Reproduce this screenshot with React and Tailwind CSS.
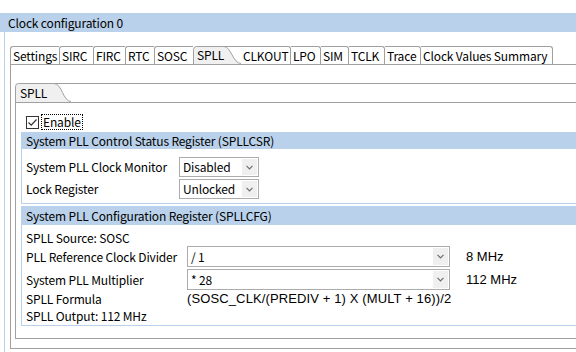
import React from "react";

const before = [
  ["Settings", "w-[49px]"],
  ["SIRC", "w-[34px]"],
  ["FIRC", "w-[32px]"],
  ["RTC", "w-[29px]"],
  ["SOSC", "w-[39px]"],
];
const after = [
  ["CLKOUT", "w-[50px]"],
  ["LPO", "w-[30px]"],
  ["SIM", "w-[28px]"],
  ["TCLK", "w-[36px]"],
  ["Trace", "w-[36px]"],
  ["Clock Values Summary", "w-[132px]"],
];

function Chevron() {
  return (
    <svg width="7" height="5" viewBox="0 0 7 5">
      <path d="M0.5 0.8 L3.5 3.8 L6.5 0.8" stroke="#6d6d6d" strokeWidth="1.2" fill="none" />
    </svg>
  );
}

function Combo({ value, cls }) {
  return (
    <div className={`flex items-center border border-[#acacac] bg-white ${cls}`}>
      <span className="flex-1 pl-[3px] whitespace-nowrap">{value}</span>
      <span className="w-[15px] self-stretch my-[1px] mr-[1px] bg-[#efefef] flex items-center justify-center">
        <Chevron />
      </span>
    </div>
  );
}

export default function App() {
  return (
    <div className="w-[576px] h-[352px] bg-white overflow-hidden font-['Noto_Sans_CJK_KR','Noto_Sans',sans-serif] text-[12px] tracking-[-0.15px] text-black leading-none">
      <div className="h-[13px]" />
      <div className="h-[19px] bg-[#b9d1ea] pl-[8px] flex items-center">Clock configuration 0</div>
      <div className="flex h-[320px]">
        <div className="w-[4px]" />
        <div className="w-[1px] bg-[#b9d1ea]" />
        <div className="w-[5px]" />
        <div className="flex-1 flex flex-col min-w-0">
          <div className="h-[14px]" />
          {/* outer tab strip */}
          <div className="flex h-[19px] border-b border-[#a0a0a0]">
            {before.map(([t, w]) => (
              <div key={t} className={`${w} h-[18px] border-t border-l border-[#a0a0a0] rounded-tl-[3px] pl-[2px] flex items-center whitespace-nowrap`}>
                {t}
              </div>
            ))}
            <div className="w-[48px] h-[18px] relative flex items-center pl-[4px]">
              <svg className="absolute inset-0" width="48" height="18" viewBox="0 0 48 18">
                <path d="M0.5 18 V3.5 Q0.5 0.5 3.5 0.5 H31 C38 0.5 40 17.5 48 17.5 V18 Z" fill="#f0f0f0" stroke="none" />
                <path d="M0.5 18 V3.5 Q0.5 0.5 3.5 0.5 H31 C38 0.5 40 17.5 48 17.5" fill="none" stroke="#a0a0a0" />
                <path d="M31 0.5 H48" stroke="#a0a0a0" />
              </svg>
              <span className="relative">SPLL</span>
            </div>
            {after.map(([t, w]) => (
              <div key={t} className={`${w} h-[18px] border-t border-r border-[#a0a0a0] rounded-tr-[3px] pl-[2px] flex items-center whitespace-nowrap`}>
                {t}
              </div>
            ))}
          </div>
          {/* outer content */}
          <div className="border-l border-b border-[#a0a0a0] pt-[18px] pl-[4px] pb-[9px]">
            {/* inner tab strip */}
            <div className="flex h-[20px] border-b border-[#a0a0a0]">
              <div className="w-[56px] h-[19px] relative flex items-center pl-[5px]">
                <svg className="absolute inset-0" width="56" height="19" viewBox="0 0 56 19">
                  <path d="M0.5 19 V3.5 Q0.5 0.5 3.5 0.5 H39 C47 0.5 48 18.5 56 18.5 V19 Z" fill="#f0f0f0" stroke="none" />
                  <path d="M0.5 19 V3.5 Q0.5 0.5 3.5 0.5 H39 C47 0.5 48 18.5 56 18.5" fill="none" stroke="#a0a0a0" />
                  <path d="M39 0.5 H56" stroke="#a0a0a0" />
                </svg>
                <span className="relative">SPLL</span>
              </div>
              <div className="flex-1 border-t border-[#a0a0a0]" />
            </div>
            {/* inner content */}
            <div className="border-l border-b border-[#a0a0a0] pl-[5px] pb-[12px]">
              <div className="h-[11px]" />
              <div className="h-[16px] flex items-center pl-[5px]">
                <div className="w-[13px] h-[13px] border border-[#333333] bg-white flex items-center justify-center">
                  <svg width="11" height="11" viewBox="0 0 11 11">
                    <path d="M1.5 5.5 L4.2 8.2 L9.5 2.5" stroke="#333333" strokeWidth="1.2" fill="none" />
                  </svg>
                </div>
                <span className="ml-[2px] h-[16px] border border-dotted border-black px-[1px] flex items-center">Enable</span>
              </div>
              <div className="h-[2px]" />
              {/* section 1 */}
              <div className="border-l border-b border-[#b9d1ea]">
                <div className="h-[17px] bg-[#b9d1ea] pl-[4px] flex items-center whitespace-nowrap">
                  System PLL Control Status Register (SPLLCSR)
                </div>
                <div className="pl-[4px] pt-[8px] pb-[4px] flex flex-col gap-[2px]">
                  <div className="flex items-center h-[20px]">
                    <span className="w-[153px]">System PLL Clock Monitor</span>
                    <Combo value="Disabled" cls="w-[80px] h-[20px]" />
                  </div>
                  <div className="flex items-center h-[20px]">
                    <span className="w-[153px]">Lock Register</span>
                    <Combo value="Unlocked" cls="w-[80px] h-[20px]" />
                  </div>
                </div>
              </div>
              <div className="h-[2px]" />
              {/* section 2 */}
              <div className="border-l border-b border-[#b9d1ea]">
                <div className="h-[19px] bg-[#b9d1ea] pl-[4px] flex items-center whitespace-nowrap">
                  System PLL Configuration Register (SPLLCFG)
                </div>
                <div className="pl-[4px] pt-[4px] pb-[1px] flex flex-col">
                  <div className="h-[17px] flex items-center">SPLL Source: SOSC</div>
                  <div className="flex items-center h-[21px]">
                    <span className="w-[161px]">PLL Reference Clock Divider</span>
                    <Combo value="/ 1" cls="w-[263px] h-[21px]" />
                    <span className="ml-[16px] font-['Liberation_Sans',sans-serif] text-[13px] tracking-normal">8 MHz</span>
                  </div>
                  <div className="h-[2px]" />
                  <div className="flex items-center h-[21px]">
                    <span className="w-[161px]">System PLL Multiplier</span>
                    <Combo value="* 28" cls="w-[263px] h-[21px]" />
                    <span className="ml-[16px] font-['Liberation_Sans',sans-serif] text-[13px] tracking-normal">112 MHz</span>
                  </div>
                  <div className="flex items-center h-[17px]">
                    <span className="w-[161px]">SPLL Formula</span>
                    <span className="font-['Liberation_Sans',sans-serif] text-[13px] tracking-[0.12px] whitespace-nowrap">(SOSC_CLK/(PREDIV + 1) X (MULT + 16))/2</span>
                  </div>
                  <div className="h-[17px] flex items-center">SPLL Output: 112 MHz</div>
                </div>
              </div>
            </div>
          </div>
        </div>
      </div>
    </div>
  );
}
